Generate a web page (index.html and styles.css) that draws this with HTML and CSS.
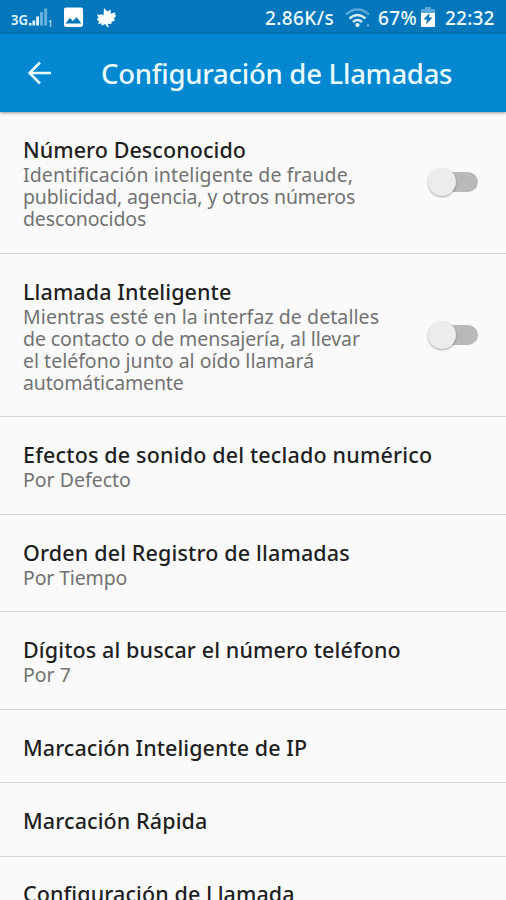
FILE: index.html
```html
<!DOCTYPE html>
<html lang="es">
<head>
<meta charset="utf-8">
<title>Configuración de Llamadas</title>
<link rel="stylesheet" href="styles.css">
</head>
<body>
<div class="status">
  <svg class="left-icons" width="130" height="34" viewBox="0 0 130 34">
    <text x="11" y="25" class="network" textLength="17" lengthAdjust="spacingAndGlyphs">3G</text>
    <path d="M29 23h2.500v2.500H29zM32.500 20.500h2.700v5h-2.700zM36.200 16.500H39v9h-2.800z" fill="#e4f4fb"/>
    <path d="M40 12h3v13.500h-3zM44.200 8.500h3v17h-3z" fill="#67b1dc"/>
    <text x="48" y="27" class="sim">1</text>
    <path fill-rule="evenodd" fill="#fff" d="M66 7.500h15q2 0 2 2v15.500q0 2-2 2H66q-2 0-2-2V9.500q0-2 2-2zM65.500 23.500h16L76.500 17l-3.500 4-3.300-3z"/>
    <path fill="#fff" d="M104 8l3 3.200 3.500-1.500.5 4 4.500-1.500-.7 2.500 1.500.8-2.300 3 1 1.800-3.800 2 .3 1.800-4-.4 1.300 3-1 .7-2.600-3.300-3.700 1.600.2-2.100-3.500.2.800-2.400-2.500-2.300 2-1-1.500-3.500 2.700.5 1.300-1.200 2.500 1.500z"/>
  </svg>
  <span class="speed">2.86K/s</span>
  <svg class="wifi" width="26" height="22" viewBox="0 0 26 22">
    <g fill="none" stroke-width="2.500"><path d="M1 7.500Q12.500-2.500 24 7.500" stroke="#58a9d8"/><path d="M4.500 11.500q8-7 16 0M8 15q4.500-4 9 0" stroke="#d3edf8"/></g>
    <circle cx="12.500" cy="18" r="2" fill="#fff"/><path d="M22 17.500h2v2h-2z" fill="#8bc5e5"/>
  </svg>
  <span class="percent">67%</span>
  <svg class="battery" width="14" height="20" viewBox="0 0 14 20">
    <path d="M4 0h6v2h4v4H0V2h4z" fill="#58a9d8"/><path d="M0 6h14v14H0z" fill="#fff"/><path d="M8.500 6L2.500 12.500H6L5 17.500l6.500-7H8z" fill="#0877b9"/>
  </svg>
  <span class="clock">22:32</span>
</div>
<header>
  <svg class="back" width="24" height="24" viewBox="0 0 24 24"><path d="M23 12H2M12 1.500L1.500 12 12 22.500" fill="none" stroke="#e9faff" stroke-width="2.500"/></svg>
  <h1>Configuración de Llamadas</h1>
</header>
<main>
  <section class="row"><h2 class="t1">Número Desconocido</h2>
    <p><span class="a1">Identificación inteligente de fraude,</span><span class="a2">publicidad, agencia, y otros números</span><span class="a3">desconocidos</span></p>
    <i class="switch"></i></section>
  <section class="row tall"><h2 class="t2">Llamada Inteligente</h2>
    <p><span class="b1">Mientras esté en la interfaz de detalles</span><span class="b2">de contacto o de mensajería, al llevar</span><span class="b3">el teléfono junto al oído llamará</span><span class="b4">automáticamente</span></p>
    <i class="switch"></i></section>
  <section class="row"><h2 class="t3">Efectos de sonido del teclado numérico</h2><p><span class="c1">Por Defecto</span></p></section>
  <section class="row"><h2 class="t4">Orden del Registro de llamadas</h2><p><span class="c2">Por Tiempo</span></p></section>
  <section class="row"><h2 class="t5">Dígitos al buscar el número teléfono</h2><p><span class="c3">Por 7</span></p></section>
  <section class="row"><h2 class="t6">Marcación Inteligente de IP</h2></section>
  <section class="row"><h2 class="t7">Marcación Rápida</h2></section>
  <section class="row"><h2 class="t8">Configuración de Llamada</h2></section>
</main>
</body>
</html>
```
FILE: styles.css
```css
* { box-sizing: border-box; }
body { margin: 0; width: 506px; height: 900px; overflow: hidden; background: #fafafa; font-family: "Noto Sans", "Open Sans", sans-serif; display: flex; flex-direction: column; }
h1, h2, p { margin: 0; white-space: nowrap; }
.status { height: 34px; flex: none; background: #0277bb; color: #f0fbff; display: flex; align-items: center; font-size: 19px; font-weight: 500; }
.left-icons { margin-right: 135px; }
.network { font-size: 15px; font-weight: 600; fill: #e4f6fc; }
.sim { font-size: 8px; fill: #d9f0fa; }
.status span { white-space: nowrap; line-height: 26px; padding-top: 1px; }
.speed { width: 80px; letter-spacing: .4px; }
.wifi { margin-top: 1px; }
.percent { width: 43px; margin-left: 7px; letter-spacing: .4px; }
.clock { margin-left: 10px; letter-spacing: .2px; }
header { height: 78px; flex: none; background: #0288d1; display: flex; align-items: center; padding-left: 28px; box-shadow: 0 1px 3px rgba(0,0,0,.4); position: relative; }
h1 { margin: 2px 0 0 49px; color: #e9faff; font-size: 27.5px; line-height: 36px; font-weight: 500; letter-spacing: -.26px; }
main { display: grid; grid-template-rows: 142px 163px 98px 97px 98px 73px 74px 74px; }
.row { position: relative; padding: 25px 23px 0; border-bottom: 1px solid #d6d6d6; }
h2 { width: max-content; font-size: 21.5px; line-height: 26px; font-weight: 500; color: #1f1f1f; }
p { margin-top: 1px; font-size: 19.5px; line-height: 22px; color: #727272; }
p span { display: block; width: max-content; }
.row:nth-child(8) { padding-top: 24px; }
.t1 { letter-spacing: .06px; }
.t2, .t7, .t8 { letter-spacing: .1px; }
.t3 { letter-spacing: .17px; }
.t4 { letter-spacing: .15px; }
.t5 { letter-spacing: .12px; }
.t6 { letter-spacing: .05px; }
.a1 { letter-spacing: .11px; }
.a2, .a3, .b4, .c2 { letter-spacing: -.14px; }
.b1 { letter-spacing: .08px; }
.b2 { letter-spacing: -.08px; }
.switch { position: absolute; right: 28px; top: 60px; width: 40px; height: 20px; border-radius: 10px; background: #b9b9b9; }
.tall .switch { top: 71px; }
.switch::before { content: ""; position: absolute; left: -10px; top: -4px; width: 28px; height: 28px; border-radius: 50%; background: #ececec; box-shadow: 0 1px 2px rgba(0,0,0,.35); }
```
